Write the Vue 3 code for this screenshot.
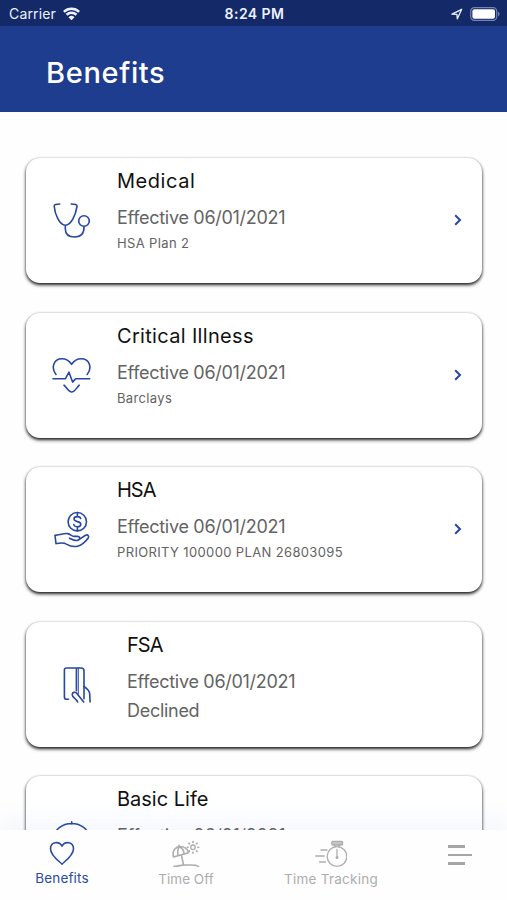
<script setup>
const plans = [
  { id: 'medical', title: 'Medical', date: '06/01/2021', note: 'HSA Plan 2', link: true },
  { id: 'critical', title: 'Critical Illness', date: '06/01/2021', note: 'Barclays', link: true },
  { id: 'hsa', title: 'HSA', date: '06/01/2021', note: 'PRIORITY 100000 PLAN 26803095', link: true },
  { id: 'fsa', title: 'FSA', date: '06/01/2021', note: 'Declined', declined: true },
  { id: 'life', title: 'Basic Life', date: '06/01/2021', note: '' }
]
</script>

<template>
  <div class="screen">
    <div class="status">
      <div class="carrier">
        <span>Carrier</span>
        <svg class="wifi" viewBox="0 0 20 15">
          <path d="M1.8 5.2a12 12 0 0 1 16.4 0M4.7 8.3a7.8 7.8 0 0 1 10.6 0" />
          <path class="dot" d="M6.8 10.9a4.7 4.7 0 0 1 6.4 0L10 14.2z" />
        </svg>
      </div>
      <span class="time">8:24 PM</span>
      <div class="indicators">
        <svg class="location" viewBox="0 0 12 12"><path d="M1 6.2 10.7 1.3 6.3 10.8 5.9 6.3z" /></svg>
        <svg class="battery" viewBox="0 0 30 14">
          <rect class="shell" x=".7" y=".7" width="26" height="12.6" rx="3.6" />
          <rect class="level" x="2.4" y="2.3" width="22.6" height="9.4" rx="2" />
          <path class="cap" d="M28 4.8c2 .6 2 3.8 0 4.4z" />
        </svg>
      </div>
    </div>

    <header class="header"><h1>Benefits</h1></header>

    <main class="list">
      <div v-for="p in plans" :key="p.id" class="card" :class="[p.id, { declined: p.declined }]">
        <svg class="icon" viewBox="0 0 40 40">
          <template v-if="p.id === 'medical'">
            <path d="M8.7 4C5 4 3 4.3 3.2 6.5 4 14 8.3 25.3 14.4 25.3S24.8 14 26 6.5C26.3 4.3 24 4 20.2 4M14.3 25.6v3.2c0 5 3.2 8.2 9.3 8.2s9.5-3.4 9.5-10.5" />
            <circle cx="33" cy="21" r="5.3" />
          </template>
          <template v-else-if="p.id === 'critical'">
            <path d="M5 19.4C-.2 13 2.5 3.8 11 3.8c4.4 0 7.4 2.3 9.6 5.5 2.2-3.2 5.2-5.5 9.6-5.5 8.5 0 11.2 9.2 6 15.6" />
            <path d="M2 23.8h12.3L18 17.2l3.6 9.9 3-3.3h14.1M13 30.2c3 2.7 4.6 6.8 7.7 6.8s4.7-4.1 7.5-6.8" />
          </template>
          <template v-else-if="p.id === 'hsa'">
            <circle cx="26.3" cy="12.7" r="9.2" />
            <path d="M29.7 9.5c-.4-1.3-1.6-1.9-3.3-1.9-2 0-3.4 1-3.4 2.5 0 3.4 6.8 1.6 6.8 5.1 0 1.6-1.5 2.6-3.5 2.6-1.8 0-3.1-.8-3.5-2.2M26.4 3.6v4M26.4 17.8v4" />
            <path d="M18.6 29.2C21.5 30.6 23.5 31.8 26 31.5 28 31.1 32 27.4 34.6 26.2C36.7 25.2 38.4 27 37.2 29C35 32.3 30.2 36.4 26.6 37.2C22.6 38 18.4 36.9 15.4 35.1C12.6 33.3 9 34 5 34.6L4 26.4C8 26.1 12.5 24.3 16.6 24.6C19.4 24.9 20.6 27.3 23.2 27.4H26.4C28.8 27.5 29.3 29 28.2 30.4" />
          </template>
          <template v-else-if="p.id === 'fsa'">
            <path d="M7.5 35.3H6c-1.7 0-2.6-.8-2.6-2.4V5.8C3.4 4.5 4.2 4 5.5 4h14.7c1.7 0 2.8 1 2.8 2.7v28M15.4 4v22.8" />
            <path class="fine" d="M17.3 4v26" />
            <path d="M16.6 38c-.7-3.5-5.4-4-5.4-7.2 0-2.6 2.8-3.4 4.7-1.4L22.7 38M23 22.5c3.5 2.3 5.5 4 5.7 7.3l.4 8.2" />
          </template>
          <path v-else d="M2 22C3.8 0 37.5 0 39.3 22M20.7 6V3.8" />
        </svg>
        <div class="info">
          <h2>{{ p.title }}</h2>
          <p class="date">Effective {{ p.date }}</p>
          <p class="note">{{ p.note }}</p>
        </div>
        <svg v-if="p.link" class="chevron" viewBox="0 0 8 12"><path d="M1.2 1.2 6 6l-4.8 4.8" /></svg>
      </div>
    </main>

    <nav class="tabs">
      <a class="tab active">
        <svg class="tab-icon" viewBox="0 0 32 28">
          <path class="heart" d="M16 25.1C13 22.2 4.5 16.4 4.5 9.7c0-6.7 8.5-8.2 11.5-2.5 3-5.7 11.5-4.2 11.5 2.5 0 6.7-8.5 12.5-11.5 15.4z" />
        </svg>
        <span>Benefits</span>
      </a>
      <a class="tab">
        <svg class="tab-icon" viewBox="0 0 32 28">
          <path class="umbrella" d="M3.5 16.9C1.6 9.8 6.6 6.8 9.6 6.6c4.4-.4 8.4 2.3 9 6.2L3.5 16.9M8 15.7C7.2 11 8 8.4 9.6 6.7c2.6 1.1 4.1 3.6 4.5 7.2M9.4 6.6l-.4-1.4M11.4 15l2.2 10.3M4 26.2c4.5.4 6.3-1.5 10.6-1.2 4.7.4 9.8-.9 13.9 1.4" />
          <circle cx="23" cy="7.3" r="2.3" />
          <path class="rays" d="M23 1.7v.5M23 12.4v.5M17.4 7.3h.5M28.1 7.3h.5M19 3.3l.4.4M26.6 10.9l.4.4M19 11.3l.4-.4M26.6 3.7l.4-.4" />
        </svg>
        <span>Time Off</span>
      </a>
      <a class="tab">
        <svg class="tab-icon" viewBox="0 0 32 28">
          <circle cx="22" cy="16.5" r="9.8" />
          <rect class="knob" x="16.8" y="1.4" width="10.8" height="3.6" rx="1" />
          <path d="M20 5.2v1.6M24 5.2v1.6M22 9.5v8M6 10h6M.8 16h8.5M4.5 22h6" />
          <circle class="hub" cx="22" cy="17.6" r="1.5" />
        </svg>
        <span class="wide">Time Tracking</span>
      </a>
      <a class="tab menu">
        <i></i>
        <i></i>
        <i></i>
      </a>
    </nav>
  </div>
</template>

<style>
body {
  margin: 0;
  background: #fefefe;
}
</style>

<style scoped>
.screen {
  width: 507px;
  height: 900px;
  overflow: hidden;
  display: flex;
  flex-direction: column;
  background: #fefefe;
  font-family: Inter, "Liberation Sans", sans-serif;
}
svg {
  display: block;
  fill: none;
  stroke: currentColor;
  stroke-linecap: round;
  stroke-linejoin: round;
}
h1, h2, p { margin: 0; }

.status {
  flex: none;
  height: 26px;
  box-sizing: border-box;
  padding: 1px 7px 0 9px;
  display: grid;
  grid-template-columns: 1fr auto 1fr;
  align-items: center;
  background: #142967;
  color: #eef2ff;
  font-size: 14px;
}
.carrier {
  display: flex;
  align-items: center;
  gap: 6px;
  letter-spacing: .15px;
}
.wifi {
  width: 19px;
  height: 14px;
  stroke-width: 2.6;
  stroke-linecap: butt;
}
.wifi .dot { fill: currentColor; stroke: none; }
.time { font-weight: 600; letter-spacing: .45px; }
.indicators {
  display: flex;
  justify-content: flex-end;
  align-items: center;
  gap: 7px;
}
.location { width: 12px; height: 12px; stroke-width: 1.3; }
.battery { width: 30px; height: 14px; }
.shell { stroke: #7583ae; stroke-width: 1.2; }
.level { fill: #fff; stroke: none; }
.cap { fill: #7583ae; stroke: none; }

.header {
  flex: none;
  height: 86px;
  box-sizing: border-box;
  padding: 7px 46px 0;
  display: flex;
  align-items: center;
  background: #1f3d8f;
  color: #fff;
}
h1 {
  font-size: 29px;
  font-weight: 500;
  letter-spacing: .65px;
}

.list {
  flex: 1;
  min-height: 0;
  overflow: hidden;
  padding: 46px 25px 0 26px;
  display: flex;
  flex-direction: column;
  gap: 29.6px;
}
.card {
  flex: none;
  height: 125px;
  box-sizing: border-box;
  padding: 0 20px 1px 25px;
  display: flex;
  align-items: center;
  border-radius: 14px;
  background: #fff;
  box-shadow: 0 2px 3.5px rgba(0, 0, 0, .9), 0 0 2px rgba(0, 0, 0, .2);
}
.icon {
  flex: none;
  width: 40px;
  height: 40px;
  color: #2747a0;
  stroke-width: 1.6;
}
.icon .fine { stroke-width: 1; }
.info {
  flex: 1;
  align-self: flex-start;
  padding: 9px 0 0 26px;
}
.declined { padding-left: 35px; }
h2 {
  font-size: 20px;
  line-height: 28px;
  font-weight: 400;
  color: #111;
}
.medical h2 { letter-spacing: .55px; }
.critical h2 { letter-spacing: .32px; }
.hsa h2, .fsa h2 { letter-spacing: -1px; }
.date {
  margin-top: 10px;
  font-size: 18px;
  line-height: 26px;
  letter-spacing: -.29px;
  color: #636363;
}
.note {
  margin-top: 2px;
  font-size: 13px;
  line-height: 20px;
  letter-spacing: .36px;
  color: #636363;
}
.declined .note {
  margin-top: 3px;
  font-size: 18px;
  line-height: 26px;
  letter-spacing: -.29px;
}
.chevron {
  width: 8px;
  height: 12px;
  color: #2747a0;
  stroke-width: 2;
  stroke-linecap: butt;
  stroke-linejoin: miter;
}

.tabs {
  position: relative;
  flex: none;
  height: 70px;
  display: grid;
  grid-template-columns: 124px 124px 166px 93px;
  background: #fefefe;
  box-shadow: 0 -8px 24px rgba(90, 130, 230, .07);
}
.tab {
  display: flex;
  flex-direction: column;
  align-items: center;
  padding-top: 10px;
  color: #adadad;
  font-size: 13.5px;
  line-height: 20px;
}
.tab.active { color: #2b4aa2; padding-top: 9px; letter-spacing: .15px; }
.wide { letter-spacing: .25px; }
.tab-icon {
  width: 32px;
  height: 28px;
  margin-bottom: 1px;
  stroke-width: 1.3;
}
.heart, .umbrella { stroke-width: 1.6; }
.rays { stroke-width: 1.8; }
.knob { fill: #c4c4c4; }
.hub { fill: currentColor; stroke: none; }
.menu {
  align-items: flex-start;
  padding: 15px 0 0 34px;
  gap: 6px;
}
.menu i {
  width: 17px;
  height: 2.5px;
  background: #a6a6a6;
}
.menu i:nth-child(2) { width: 24px; }
</style>
